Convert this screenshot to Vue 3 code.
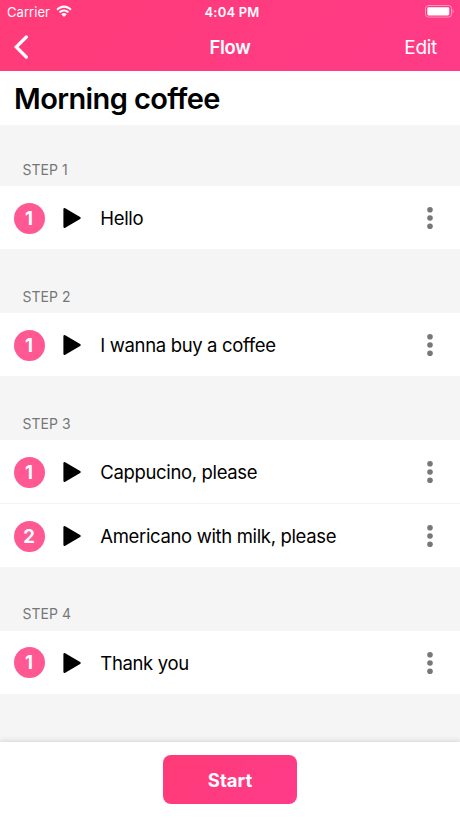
<template>
    <div class="screen">
        <header class="header">
            <div class="status-bar">
                <div class="carrier">
                    <span>Carrier</span>
                    <svg class="wifi" viewBox="0 0 16 12">
                        <path d="M.4 4.1C4.6-.6 11.4-.6 15.6 4.1L14.2 5.5C10.6 1.8 5.4 1.8 1.8 5.5z" fill="#fff" />
                        <path d="M2.9 6.7c2.9-3 7.3-3 10.2 0l-1.4 1.4c-2.2-2.1-5.2-2.1-7.4 0z" fill="#fff" />
                        <path d="M5.3 9.2c1.5-1.5 3.9-1.5 5.4 0L8 11.9z" fill="#fff" />
                    </svg>
                </div>
                <span class="time">4:04 PM</span>
                <svg class="battery" viewBox="0 0 29 13">
                    <rect x=".5" y=".5" width="26" height="11.6" rx="3" fill="none" stroke="#fff" stroke-opacity=".45" />
                    <rect x="2.3" y="2.2" width="22" height="8.2" rx="1.4" fill="#fff" />
                    <path d="M27.6 4.4c1.5.6 1.5 3.2 0 3.8z" fill="#fff" fill-opacity=".5" />
                </svg>
            </div>
            <nav class="nav-bar">
                <button class="back" aria-label="Back">
                    <svg viewBox="0 0 14 24">
                        <path d="M12.3 2L2.2 12l10.1 10" fill="none" stroke="#fff" stroke-width="3.2" stroke-linecap="round" />
                    </svg>
                </button>
                <span class="nav-title">Flow</span>
                <button class="edit">Edit</button>
            </nav>
        </header>

        <h1 class="title">Morning coffee</h1>

        <main class="steps">
            <section v-for="(phrases, i) in steps" :key="i" class="step">
                <h2 class="step-title">STEP {{ i + 1 }}</h2>
                <ul class="phrases">
                    <li v-for="(phrase, j) in phrases" :key="phrase" class="phrase">
                        <span class="badge">{{ j + 1 }}</span>
                        <button class="play" aria-label="Play">
                            <svg viewBox="0 0 18 22">
                                <path d="M1.6 2.2v17.6L16.5 11z" stroke="#000" stroke-width="2.4" stroke-linejoin="round" />
                            </svg>
                        </button>
                        <span class="text">{{ phrase }}</span>
                        <button class="more" aria-label="More">
                            <svg viewBox="0 0 6 24" fill="#777">
                                <circle cx="3" cy="3.7" r="2.8" />
                                <circle cx="3" cy="12" r="2.8" />
                                <circle cx="3" cy="20.3" r="2.8" />
                            </svg>
                        </button>
                    </li>
                </ul>
            </section>
        </main>

        <footer class="footer">
            <button class="start">Start</button>
        </footer>
    </div>
</template>

<script setup>
const steps = [
    ['Hello'],
    ['I wanna buy a coffee'],
    ['Cappucino, please', 'Americano with milk, please'],
    ['Thank you'],
]
</script>

<style>
body {
    margin: 0;
}
</style>

<style scoped>
.screen {
    display: flex;
    flex-direction: column;
    height: 818px;
    overflow: hidden;
    background: #f5f5f5;
    color: #000;
    font-family: Inter, "Liberation Sans", sans-serif;
}

button {
    padding: 0;
    border: 0;
    background: none;
    color: inherit;
    font: inherit;
    letter-spacing: inherit;
}

svg {
    display: block;
}

.header {
    flex: none;
    height: 71.4px;
    background: linear-gradient(135deg, #ff3b78, #ff3b88);
    color: #fff;
}

.status-bar {
    display: grid;
    grid-template-columns: 1fr auto 1fr;
    align-items: center;
    height: 23px;
    padding: 0 6px;
    font-size: 13px;
}

.carrier {
    display: flex;
    align-items: center;
    gap: 6px;
    padding-left: 1px;
    letter-spacing: 0.05px;
}

.wifi {
    width: 16px;
    height: 12px;
    margin-bottom: 1px;
}

.time {
    padding-left: 4px;
    font-weight: 600;
    letter-spacing: 0.2px;
}

.battery {
    justify-self: end;
    width: 29px;
    height: 13px;
}

.nav-bar {
    display: grid;
    grid-template-columns: 1fr auto 1fr;
    align-items: center;
    height: 48px;
    padding: 0 23px;
}

.back {
    justify-self: start;
    margin-left: -8.7px;
}

.back svg {
    width: 14px;
    height: 24px;
}

.nav-title {
    font-size: 18.5px;
    font-weight: 600;
    letter-spacing: -0.3px;
}

.edit {
    justify-self: end;
    font-size: 19px;
    letter-spacing: -0.3px;
}

.title {
    flex: none;
    height: 53.4px;
    margin: 0;
    padding-left: 14px;
    background: #fff;
    font-size: 29px;
    font-weight: 600;
    letter-spacing: -0.6px;
    line-height: 55px;
}

.steps {
    flex: 1;
}

.step-title {
    height: 63.4px;
    margin: 0;
    padding: 37.2px 0 0 22.5px;
    box-sizing: border-box;
    color: #777;
    font-size: 14px;
    font-weight: 400;
    letter-spacing: 0.05px;
    line-height: 20px;
}

.step:first-child .step-title {
    height: 61.2px;
    padding-top: 35px;
}

.phrases {
    margin: 0;
    padding: 0;
    background: #fff;
    list-style: none;
}

.phrase {
    display: flex;
    align-items: center;
    height: 63.5px;
    padding: 1px 27px 0 13.5px;
    box-sizing: border-box;
}

.phrase + .phrase {
    height: 64px;
    border-top: 1px solid #f4f4f4;
}

.badge {
    width: 31px;
    height: 31px;
    border-radius: 50%;
    background: #ff5892;
    color: #fff;
    font-size: 18.5px;
    font-weight: 700;
    line-height: 31px;
    text-align: center;
}

.play {
    margin: 0 19.3px 0 18.5px;
}

.play svg {
    width: 18px;
    height: 22px;
}

.text {
    flex: 1;
    font-size: 18.5px;
    letter-spacing: -0.35px;
    line-height: 24px;
}

.more svg {
    width: 6px;
    height: 24px;
}

.footer {
    display: flex;
    flex: none;
    justify-content: center;
    height: 76.5px;
    padding-top: 13.7px;
    box-sizing: border-box;
    background: #fff;
    box-shadow: 0 -1px 5px rgba(0, 0, 0, 0.14);
}

.start {
    width: 133.6px;
    height: 49px;
    border-radius: 8px;
    background: linear-gradient(135deg, #ff3b76, #ff3b8b);
    color: #fff;
    font-size: 18.5px;
    font-weight: 700;
}
</style>
